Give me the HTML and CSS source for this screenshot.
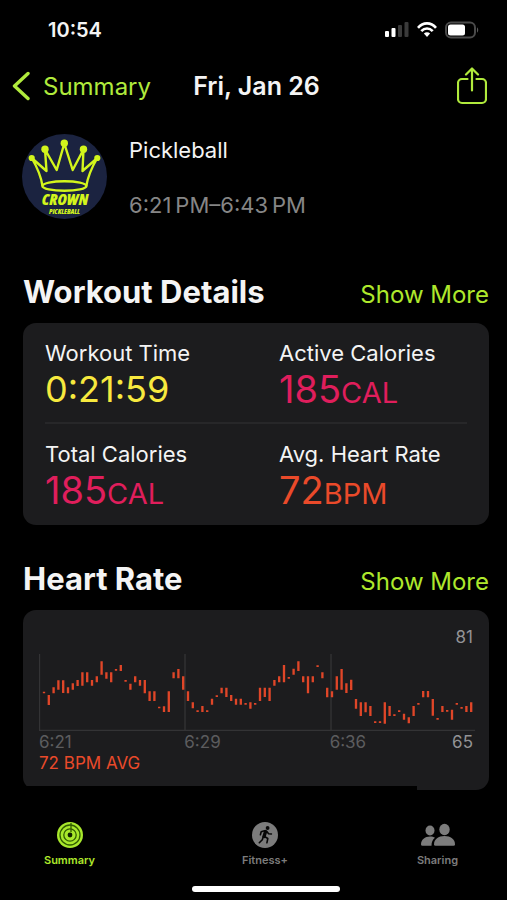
FILE: index.html
```html
<!DOCTYPE html>
<html lang="en">
<head>
<meta charset="utf-8">
<meta name="viewport" content="width=device-width, initial-scale=1">
<title>Workout</title>
<link rel="stylesheet" href="styles.css">
</head>
<body>
<div class="status">
  <span class="clock">10:54</span>
  <div class="status-icons">
    <svg width="24" height="16" viewBox="0 0 24 16"><rect x="0" y="9" width="4" height="6" rx="1" fill="#fff"/><rect x="6.500" y="6" width="4" height="9" rx="1" fill="#fff"/><rect x="13" y="3" width="4" height="12" rx="1" fill="#3a3a3a"/><rect x="19.500" y="0" width="4" height="15" rx="1" fill="#3a3a3a"/></svg>
    <svg width="20" height="16" viewBox="0 0 20 16" fill="none" stroke="#fff" stroke-width="2.600"><path d="M1 5.800C6-.1 14-.1 19 5.800"/><path d="M4.300 9.200c3.300-3.600 8.100-3.600 11.400 0"/><path d="M6.900 11.500c1.900-1.700 4.300-1.700 6.200 0L10 15z" fill="#fff" stroke="none"/></svg>
    <svg width="34" height="18" viewBox="0 0 34 18"><rect x="1" y="1.500" width="29" height="15" rx="5" fill="none" stroke="#4a4a4a" stroke-width="2"/><rect x="3" y="3.500" width="17" height="11" rx="2.500" fill="#fff"/><path d="M32 6.500c1.600.5 1.600 4.500 0 5z" fill="#5a5a5a"/></svg>
  </div>
</div>

<header class="nav">
  <button class="back" type="button">
    <svg width="18" height="30" viewBox="0 0 18 30" fill="none" stroke="currentColor" stroke-width="3.400" stroke-linecap="round" stroke-linejoin="round"><path d="M16 2.500 2.500 15 16 27.500"/></svg>
    <span>Summary</span>
  </button>
  <h1 class="title">Fri, Jan 26</h1>
  <button class="share" type="button" aria-label="Share">
    <svg width="30" height="38" viewBox="0 0 30 38" fill="none" stroke="currentColor" stroke-width="2.200" stroke-linecap="round" stroke-linejoin="round"><path d="M10.500 12H5a4 4 0 0 0-4 4v16a4 4 0 0 0 4 4h20a4 4 0 0 0 4-4V16a4 4 0 0 0-4-4h-5.500M15 23.500V2M9 7.500 15 1.500l6 6"/></svg>
  </button>
</header>

<main>
  <section class="workout">
    <svg class="logo" viewBox="0 0 85 85">
      <circle cx="42.500" cy="42.500" r="42.500" fill="#1b2340"/>
      <g fill="none" stroke="#d3f51c" stroke-width="2.400" stroke-linejoin="round">
        <path d="M20.500 52C19 42 15 33 9.700 24L24.500 37 23 15.500 34.700 36 42.300 9.500 50.700 36 61.500 15.500 60.500 37 75.300 24C70 33 66 42 64.300 52"/>
        <ellipse cx="42.400" cy="52" rx="22" ry="4.800"/>
      </g>
      <g fill="#d3f51c"><circle cx="9.700" cy="24" r="3.100"/><circle cx="23" cy="15.300" r="3.700"/><circle cx="42.300" cy="9.300" r="3.700"/><circle cx="61.500" cy="15.300" r="3.700"/><circle cx="75.300" cy="24" r="3.100"/></g>
      <text class="logo-name" x="43" y="71">CROWN</text>
      <text class="logo-sub" x="42.500" y="80">PICKLEBALL</text>
    </svg>
    <div class="workout-text">
      <h2 class="workout-name">Pickleball</h2>
      <p class="workout-time">6:21&thinsp;PM–6:43&thinsp;PM</p>
    </div>
  </section>

  <section>
    <div class="section-head"><h2>Workout Details</h2><a href="#details">Show More</a></div>
    <dl class="card details">
      <div class="metric"><dt>Workout Time</dt><dd class="time">0:21:59</dd></div>
      <div class="metric"><dt>Active Calories</dt><dd class="pink">185<span>CAL</span></dd></div>
      <div class="metric"><dt>Total Calories</dt><dd class="pink">185<span>CAL</span></dd></div>
      <div class="metric"><dt>Avg. Heart Rate</dt><dd class="orange">72<span>BPM</span></dd></div>
    </dl>
  </section>

  <section>
    <div class="section-head"><h2>Heart Rate</h2><a href="#heart">Show More</a></div>
    <div class="card heart">
      <div class="max">81</div>
      <svg class="chart" viewBox="0 0 1308 231" preserveAspectRatio="none">
        <path class="axis" d="M1.500 0V229.500H1308M438 0V229M876 0V229"/>
        <path class="bars" id="bars"/>
      </svg>
      <div class="times"><span>6:21</span><span>6:29</span><div class="last"><span>6:36</span><span class="min">65</span></div></div>
      <p class="average">72 BPM AVG</p>
    </div>
  </section>
</main>

<nav class="tabs">
  <a class="tab active" href="#summary">
    <svg width="26" height="26" viewBox="0 0 26 26" fill="none"><circle cx="13" cy="13" r="13" fill="#a8e82c"/><g stroke="#315c00" stroke-width="1.300"><circle cx="13" cy="13" r="10"/><circle cx="13" cy="13" r="6.200"/></g><circle cx="13" cy="13" r="2.400" fill="#102000"/><path d="M14 1v9" stroke="#315c00" stroke-width="1.300"/></svg>
    <span>Summary</span>
  </a>
  <a class="tab" href="#fitness">
    <svg width="26" height="26" viewBox="0 0 26 26"><circle cx="13" cy="13" r="13" fill="#7c7c7c"/><circle cx="15.600" cy="6" r="1.900" fill="#080808"/><g fill="none" stroke="#080808" stroke-linecap="round" stroke-linejoin="round"><path d="m13.600 9.500-1.600 5" stroke-width="3.400"/><path d="m12.500 8.700-3.300 1-.8 3M14.800 9.500l1.800 2.300 2.800.2M12.500 14.500l3.300 2-.9 4.300M11.300 14.500l-1 3.200-3 3" stroke-width="1.600"/></g></svg>
    <span>Fitness+</span>
  </a>
  <a class="tab" href="#sharing">
    <svg width="36" height="26" viewBox="0 0 36 26" fill="#7c7c7c"><ellipse cx="10" cy="8.500" rx="4.500" ry="5"/><path d="M1 22.500c0-5 4-8 9-8 2 0 3.700.5 5 1.300-2.500 2-3.500 4.500-3.500 8H2.500q-1.500 0-1.500-1.300z"/><ellipse cx="24.500" cy="7.500" rx="5.200" ry="5.700"/><path d="M14 22.500c0-5.500 4.500-8.500 10.500-8.500S35 17 35 22.500q0 1.300-1.500 1.300h-18q-1.500 0-1.500-1.300z"/></svg>
    <span>Sharing</span>
  </a>
</nav>
<div class="home"><div class="home-bar"></div></div>
<script src="chart.js"></script>
</body>
</html>
```
FILE: styles.css
```css
* { box-sizing: border-box; }
body {
  margin: 0;
  min-height: 100vh;
  display: flex;
  flex-direction: column;
  background: #000;
  color: #f4f4f4;
  font-family: Inter, "Liberation Sans", sans-serif;
}
h1, h2, p, dl, dd { margin: 0; }
a { color: inherit; text-decoration: none; }
button { padding: 0; border: 0; background: none; color: inherit; font: inherit; }
svg { display: block; flex: none; }

.status {
  height: 60px;
  padding: 0 28px 0 48px;
  display: flex;
  align-items: center;
  justify-content: space-between;
}
.clock { font-size: 20px; font-weight: 600; }
.status-icons { display: flex; align-items: center; gap: 8px; }

.nav {
  height: 52px;
  padding: 0 20px 0 26px;
  display: grid;
  grid-template-columns: 1fr auto 1fr;
  align-items: center;
}
.back {
  margin-left: -14px;
  display: flex;
  align-items: center;
  gap: 13px;
  color: #b0ea3c;
  font-size: 24px;
}
.title { font-size: 25px; font-weight: 600; }
.share { justify-self: end; color: #b0ea3c; }

.workout {
  padding: 22px 22px 0;
  display: flex;
  gap: 22px;
}
.logo { width: 85px; height: 85px; }
.logo-name, .logo-sub {
  fill: #d3f51c;
  font-family: "Open Sans", sans-serif;
  font-style: italic;
  font-weight: 800;
  font-stretch: condensed;
  text-anchor: middle;
}
.logo-name { font-size: 16px; }
.logo-sub { font-size: 7px; }
.workout-name { font-size: 22px; line-height: 32px; font-weight: 400; }
.workout-time { margin-top: 23px; font-size: 22px; line-height: 32px; color: #868686; }

.section-head {
  height: 50px;
  padding: 0 18px 0 23px;
  display: flex;
  align-items: baseline;
  justify-content: space-between;
  line-height: 38px;
}
.section-head h2 { font-size: 31px; font-weight: 700; }
.section-head a { color: #aee82c; font-size: 24px; }
.workout + section { margin-top: 52px; }
section + section { margin-top: 35px; }

.card {
  margin: 0 18px 0 23px;
  border-radius: 13px;
  background: #1c1c1e;
}
.details {
  padding: 0 22px;
  display: grid;
  grid-template-columns: 1fr 1fr;
}
.metric { height: 101px; padding-top: 16px; }
.metric:nth-child(even) { padding-left: 23px; }
.metric:nth-child(-n+2) { border-bottom: 2px solid #272729; }
.metric dt { font-size: 22px; line-height: 28px; }
.metric dd { font-size: 38px; line-height: 44px; }
.metric dd span { font-size: 29px; }
.metric .time { color: #f7e93e; font-size: 36px; }
.pink { color: #e01e5c; }
.orange { color: #ea4a2a; }

.heart { position: relative; padding: 17px 14px 17px 16px; }
.heart::after {
  content: "";
  position: absolute;
  left: 0;
  right: 72px;
  bottom: 0;
  height: 4px;
  background: #000;
}
.max { padding-right: 2px; text-align: right; color: #939395; font-size: 17px; line-height: 20px; }
.chart { width: 100%; height: 77px; margin-top: 7px; }
.axis { fill: none; stroke: #333335; stroke-width: 4; }
.bars { fill: none; stroke: #e04628; stroke-width: 7; }
.times {
  display: grid;
  grid-template-columns: 1fr 1fr 1fr;
  color: #5c5c5e;
  font-size: 17px;
  line-height: 22px;
}
.last { display: flex; justify-content: space-between; }
.min { padding-right: 2px; color: #939395; }
.average { color: #ea4a2a; font-size: 17px; line-height: 20px; }

.tabs {
  margin-top: 32px;
  padding-right: 23px;
  display: grid;
  grid-template-columns: 139fr 252fr 93fr;
}
.tab {
  display: flex;
  flex-direction: column;
  align-items: center;
  gap: 4px;
  color: #7c7c7c;
  font-size: 11px;
  font-weight: 600;
  line-height: 16px;
}
.tab.active { color: #aee82c; }
.home { margin-top: auto; padding: 0 0 8px 25px; }
.home-bar { width: 148px; height: 6px; margin: 0 auto; border-radius: 3px; background: #fff; }
```
FILE: chart.js
```js
// Low and high end of each heart-rate sample, measured from the top of the plot.
const samples = [
  [158,163],[168,198],[145,163],[124,152],[124,162],[145,163],[133,152],[123,141],[100,140],[100,130],
  [123,140],[112,130],[67,107],[100,119],[100,130],[90,95],[78,96],[123,128],[134,152],[112,130],
  [123,140],[123,163],[157,186],[157,186],[203,208],[202,219],[157,219],[100,118],[90,118],[112,152],
  [157,186],[190,208],[214,219],[201,219],[214,219],[179,197],[169,174],[146,163],[146,174],[168,186],
  [179,197],[179,197],[192,197],[190,209],[192,197],[146,186],[146,174],[146,186],[123,140],[112,130],
  [78,130],[114,119],[89,107],[67,96],[112,130],[112,163],[112,130],[79,84],[100,118],[146,175],
  [157,175],[112,152],[90,152],[133,162],[122,153],[180,209],[190,231],[190,220],[201,231],[247,252],
  [247,252],[190,254],[201,231],[226,231],[214,219],[224,242],[235,253],[201,231],[192,197],[156,175],
  [156,175],[180,230],[237,242],[201,219],[213,218],[212,242],[192,197],[204,209],[201,219],[190,219]
];
const plotTop = 45;
const step = 14.4;
document.getElementById("bars").setAttribute("d", samples
  .map(([top, bottom], i) => `M${(15 + i * step).toFixed(1)} ${top - plotTop}V${bottom - plotTop}`)
  .join(""));
```
